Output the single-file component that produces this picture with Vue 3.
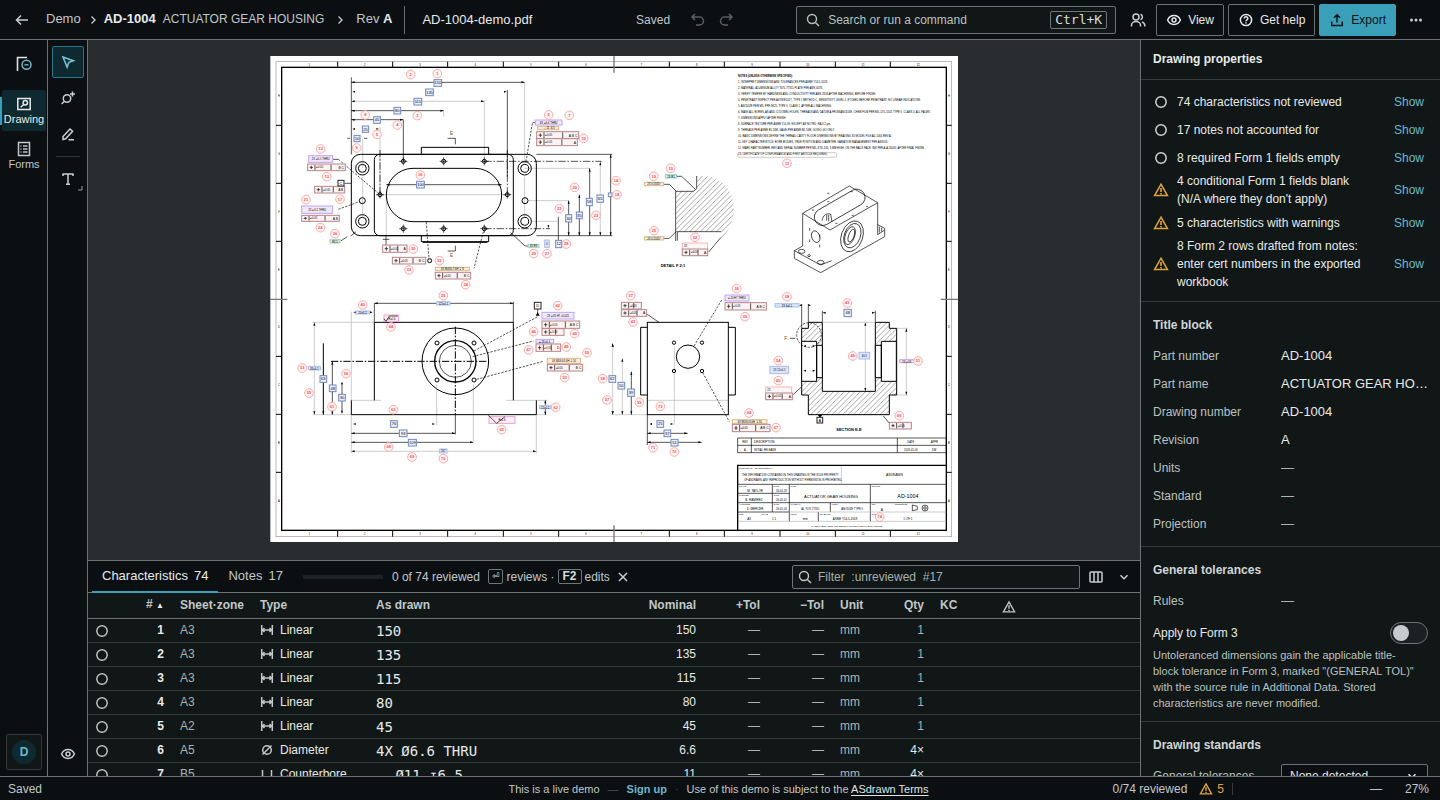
<script setup>
const issues = [
  { kind: 'open', text: '74 characteristics not reviewed' },
  { kind: 'open', text: '17 notes not accounted for' },
  { kind: 'open', text: '8 required Form 1 fields empty' },
  { kind: 'warn', text: "4 conditional Form 1 fields blank (N/A where they don't apply)" },
  { kind: 'warn', text: '5 characteristics with warnings' },
  { kind: 'warn', text: '8 Form 2 rows drafted from notes: enter cert numbers in the exported workbook' },
]
const titleBlock = [
  ['Part number', 'AD-1004'],
  ['Part name', 'ACTUATOR GEAR HOUSING'],
  ['Drawing number', 'AD-1004'],
  ['Revision', 'A'],
  ['Units', '—'],
  ['Standard', '—'],
  ['Projection', '—'],
]
const rows = [
  { n: 1, zone: 'A3', type: 'Linear', drawn: '150', nom: '150', qty: '1' },
  { n: 2, zone: 'A3', type: 'Linear', drawn: '135', nom: '135', qty: '1' },
  { n: 3, zone: 'A3', type: 'Linear', drawn: '115', nom: '115', qty: '1' },
  { n: 4, zone: 'A3', type: 'Linear', drawn: '80', nom: '80', qty: '1' },
  { n: 5, zone: 'A2', type: 'Linear', drawn: '45', nom: '45', qty: '1' },
  { n: 6, zone: 'A5', type: 'Diameter', drawn: '4X Ø6.6 THRU', nom: '6.6', qty: '4×' },
  { n: 7, zone: 'B5', type: 'Counterbore', drawn: '⌴ Ø11 ↧6.5', nom: '11', qty: '4×' },
]

const areas = [
  { x: 0, y: -18 },
  { x: 1020, y: -18 },
  { x: 0, y: 702 },
  { x: 1020, y: 702 },
]
const colTicks = [203, 368, 533, 700, 866, 1198, 1363, 1530, 1696, 1861]
const rowTicks = [208, 382, 556, 901, 1075, 1249]
const colLabels = [118, 284, 450, 616, 783, 948, 1114, 1280, 1446, 1613, 1779, 1945]
const rowLabels = [
  ['H', 121], ['G', 295], ['F', 469], ['E', 643], ['D', 814], ['C', 988], ['B', 1162], ['A', 1336],
]
const notes = [
  'NOTES (UNLESS OTHERWISE SPECIFIED):',
  '1. INTERPRET DIMENSIONS AND TOLERANCES PER ASME Y14.5-2018.',
  '2. MATERIAL: ALUMINUM ALLOY 7075-T7351 PLATE PER AMS 4078.',
  '3. VERIFY TEMPER BY HARDNESS AND CONDUCTIVITY PER AMS 2658 AFTER MACHINING, BEFORE FINISH.',
  '4. PENETRANT INSPECT PER ASTM E1417, TYPE I, METHOD C, SENSITIVITY LEVEL 2. ETCHED BEFORE PENETRANT. NO LINEAR INDICATIONS.',
  '5. ANODIZE PER MIL-PRF-8625, TYPE II, CLASS 1, AFTER ALL MACHINING.',
  '6. MASK ALL BORES, AS AND #2 DOWEL HOLES, THREADS AND DATUM A FROM ANODIZE. CHEM FILM PER MIL-DTL-5541 TYPE II, CLASS 3, ALL FACES.',
  '7. DIMENSIONS APPLY AFTER FINISH.',
  '8. SURFACE TEXTURE PER ASME Y14.36: EXCEPT AS NOTED, RA 3.2 µm.',
  '9. THREADS PER ASME B1.13M. GAGE PER ASME B1.16M, GO/NO-GO ONLY.',
  '10. BASIC DIMENSIONS DEFINE THE THREAD CAVITY FLOOR DIMENSIONS BY READING 3D MODEL FILE AD-1004 REV A.',
  '11. KEY CHARACTERISTICS: BORE BODIES, TRUE POSITION AND DIAMETER. VARIATION MANAGEMENT PER AS9103.',
  '12. MARK PART NUMBER, REV AND SERIAL NUMBER PER MIL-STD-130, 3 MM HIGH, ON THE BACK FACE. INK PER A-A-56032, AFTER FINAL FINISH.',
  '13. CERTIFICATE OF CONFORMANCE AND FIRST ARTICLE REQUIRED.',
]
const balloons = [
  [[502, 71, 1], [422, 74, 2], [442, 197, 3], [382, 225, 4], [286, 195, 8], [321, 253, 5], [260, 294, 9], [836, 195, 6], [898, 196, 7], [941, 265, 10], [152, 297, 12], [170, 380, 13], [210, 448, 17], [108, 449, 21], [151, 533, 24], [195, 551, 26], [451, 375, 16], [430, 597, 30], [417, 660, 33], [508, 632, 31], [587, 704, 34], [520, 737, 35], [868, 476, 23], [914, 412, 20], [978, 496, 22], [1038, 392, 14], [1041, 434, 18], [791, 611, 29], [831, 611, 27], [889, 582, 28]],
  [[531, 340, 11], [182, 355, 15], [131, 379, 19], [132, 542, 25], [255, 562, 32], [380, 716, 36], [62, 737, 37], [531, 740, 38]],
  [[278, 45, 40], [363, 111, 44], [863, 47, 42], [791, 125, 46], [914, 131, 45], [776, 180, 47], [889, 171, 48], [951, 188, 50], [884, 263, 52], [97, 234, 53], [228, 251, 56], [117, 309, 55], [186, 350, 61], [370, 359, 63], [998, 266, 58], [1011, 330, 57], [857, 352, 62], [695, 419, 65], [356, 471, 68], [426, 501, 69], [520, 506, 70]],
  [[69, 96, 43], [405, 80, 39], [712, 39, 41], [728, 198, 49], [924, 213, 51], [505, 212, 54], [505, 272, 60], [417, 369, 64], [498, 413, 67], [868, 377, 66], [88, 337, 59], [151, 349, 73], [129, 473, 71], [193, 486, 72], [809, 681, 74]],
]
// x, y, width, height, kind, text
const tags = [
  [[492, 89, 23, 20, 'dim', '150'], [467, 117, 23, 20, 'dim', '135'], [432, 145, 23, 20, 'dim', '115'], [372, 172, 20, 20, 'dim', '80'], [311, 200, 20, 20, 'dim', '45'], [277, 228, 19, 19, 'dim', '25'], [252, 256, 18, 19, 'dim', '10'], [440, 394, 23, 20, 'dim', '100'], [1015, 429, 11, 11, 'dim', ''], [949, 445, 18, 22, 'dim', '58'], [981, 435, 19, 22, 'dim', '65'], [919, 486, 18, 20, 'dim', '35'], [887, 494, 18, 22, 'dim', '30'], [857, 571, 18, 22, 'dim', '12'], [824, 570, 14, 22, 'size', '6'],
    [116, 317, 72, 20, 'hole', '2X ⌀5.1 THRU'], [113, 342, 113, 20, 'fcf', 'B C'], [134, 409, 90, 20, 'fcf', 'A B'], [204, 391, 18, 17, 'datum', 'C'], [95, 468, 93, 22, 'hole', '2X ⌀6.1 THRU'], [95, 496, 113, 18, 'fcf', 'A B'], [180, 569, 30, 10, 'rad', 'R2.5'], [774, 583, 33, 10, 'rad', '4X R9'], [796, 210, 80, 15, 'hole', '4X ⌀6.6 THRU'], [803, 229, 63, 10, 'thr', '⌴ ⌀11 ↧6.5'], [800, 245, 126, 21, 'fcf', 'A B C'], [800, 266, 122, 21, 'fcf', 'A'], [338, 585, 73, 22, 'fcf', 'A'], [367, 622, 100, 20, 'fcf', 'B C'], [496, 652, 102, 10, 'thr', '6X M4X0.7-6H ↧8'], [496, 667, 106, 20, 'fcf', 'B C']],
  [[166, 374, 34, 10, 'rad', '2X R2'], [103, 397, 58, 10, 'thr', '2X 0.5X45°'], [103, 560, 58, 10, 'thr', '2X 0.5X45°'], [217, 597, 76, 20, 'fcf', 'A']],
  [[500, 35, 40, 10, 'size', '125±0.1'], [258, 63, 40, 9, 'size', '20±0.2'], [115, 229, 36, 11, 'size', '83±0.2'], [150, 257, 20, 20, 'dim', '63'], [178, 285, 20, 20, 'dim', '48'], [206, 313, 20, 20, 'dim', '30'], [362, 392, 20, 20, 'dim', '76'], [388, 420, 23, 20, 'dim', '93'], [415, 448, 24, 20, 'dim', '109'], [509, 477, 22, 12, 'size', '167'], [809, 347, 33, 9, 'size', '12±0.1'], [1017, 257, 20, 20, 'dim', '62'], [342, 75, 44, 19, 'surf', '√Ra1.6'], [657, 380, 78, 20, 'surf', 'Ra1.6'], [793, 37, 20, 20, 'datum', 'D'], [816, 67, 96, 20, 'hole', '2X ⌀35 H7 +0.025'], [816, 93, 113, 22, 'fcf', 'A B C'], [816, 116, 66, 20, 'fcf', ''], [798, 148, 53, 11, 'hole', '⌀28 ±0.1'], [798, 162, 74, 22, 'fcf', 'D'], [832, 205, 100, 15, 'thr', '4X M5X0.8-6H ↧10'], [832, 223, 106, 20, 'fcf', 'B C']],
  [[34, 37, 60, 20, 'fcf', ''], [34, 59, 76, 20, 'fcf', 'A'], [345, 15, 72, 18, 'hole', '⌀20 H7 THRU'], [345, 38, 124, 22, 'fcf', 'A B C'], [24, 277, 20, 20, 'dim', '50'], [53, 297, 20, 22, 'dim', '39'], [141, 392, 20, 20, 'dim', '25'], [162, 420, 20, 20, 'dim', '37'], [183, 448, 21, 20, 'dim', '51'], [367, 389, 104, 12, 'thr', '4X M5X0.8-6H ↧10'], [367, 403, 113, 22, 'fcf', 'A B C'], [495, 41, 72, 10, 'size', '2X 6±0.1'], [702, 58, 22, 22, 'dim', '48'], [747, 187, 32, 20, 'size', '60.5'], [480, 229, 56, 22, 'size', '2X 12±0.1'], [467, 309, 80, 20, 'fcf', 'A'], [838, 397, 66, 20, 'fcf', ''], [869, 209, 42, 9, 'hole', '2X ⌀59'], [621, 382, 17, 17, 'datum', 'A']],
]
// x, y, text, size
const blockText = [
  [397, 460, 'REV', 8], [432, 460, 'DESCRIPTION', 9], [892, 460, 'DATE', 8], [962, 460, 'APPR', 8],
  [402, 482, 'A', 8], [432, 482, 'INITIAL RELEASE', 8], [882, 482, '2026-05-04', 8], [966, 482, 'DM', 8],
  [387, 537, 'PROPRIETARY AND CONFIDENTIAL', 6],
  [396, 557, 'THE INFORMATION CONTAINED IN THIS DRAWING IS THE SOLE PROPERTY', 8],
  [402, 572, 'OF ASDRAWN. ANY REPRODUCTION WITHOUT PERMISSION IS PROHIBITED.', 8],
  [828, 557, 'ASDRAWN', 10],
  [387, 591, 'DRAWN', 6], [412, 605, 'M. TAYLOR', 9], [491, 591, 'DATE', 6], [498, 605, '26-04-28', 8],
  [387, 618, 'CHECKED', 6], [406, 633, 'B. RAMIREZ', 9], [491, 618, 'DATE', 6], [498, 633, '26-05-01', 8],
  [542, 591, 'TITLE', 6], [582, 623, 'ACTUATOR GEAR HOUSING', 12], [785, 591, 'DWG NO.', 6], [862, 624, 'AD-1004', 16],
  [387, 646, 'APPROVED', 6], [410, 660, 'D. MERCER', 9], [491, 646, 'DATE', 6], [498, 660, '26-05-04', 8],
  [542, 646, 'MATERIAL', 6], [574, 660, 'AL 7075-T7351', 8], [665, 646, 'FINISH', 6], [694, 660, 'ANODIZE TYPE II', 8],
  [785, 646, 'REV', 6], [812, 662, 'A', 10], [854, 646, 'PROJECTION', 6],
  [387, 674, 'SIZE', 6], [412, 689, 'A3', 9], [454, 674, 'SCALE', 6], [486, 689, '1:1', 9],
  [542, 674, 'UNITS', 6], [578, 689, 'mm', 9], [629, 674, 'STANDARD', 6], [668, 689, 'ASME Y14.5-2018', 9],
  [785, 674, 'SHEET', 6], [880, 689, '1 OF 1', 9],
  [604, 710, 'CAGE 1ABC2   ASDRAWN DEMO PART NOT FOR MANUFACTURE', 7],
]
</script>

<template>
  <div class="app">
    <svg class="defs" aria-hidden="true">
      <symbol id="i-warn" viewBox="0 0 16 16"><path d="M8 2.2 14.4 13.6H1.6Z" fill="none" stroke="currentColor" stroke-width="1.5" /><path d="M8 6v4M8 11v1.500" fill="none" stroke="currentColor" stroke-width="1.600" /></symbol>
      <symbol id="i-eye" viewBox="0 0 16 16"><path d="M1.6 8C2.8 5.2 5.2 3.6 8 3.6s5.2 1.6 6.4 4.4c-1.2 2.8-3.6 4.4-6.4 4.4S2.8 10.8 1.6 8Z" fill="none" stroke="currentColor" stroke-width="1.5" /><circle cx="8" cy="8" r="2" fill="none" stroke="currentColor" stroke-width="1.5" /></symbol>
      <symbol id="i-ring" viewBox="0 0 16 16"><circle cx="8" cy="8" r="5.2" fill="none" stroke="currentColor" stroke-width="1.5" /></symbol>
      <symbol id="i-search" viewBox="0 0 16 16"><circle cx="7" cy="7" r="4.5" fill="none" stroke="currentColor" stroke-width="1.4" /><path d="m10.4 10.4 3.6 3.6" stroke="currentColor" stroke-width="1.4" /></symbol>
      <symbol id="i-chev" viewBox="0 0 16 16"><path d="m6.500 4.500 3.500 3.500-3.500 3.500" fill="none" stroke="currentColor" stroke-width="1.4" /></symbol>
      <symbol id="i-down" viewBox="0 0 16 16"><path d="m4.500 6.200 3.500 3.500 3.500-3.500" fill="none" stroke="currentColor" stroke-width="1.5" /></symbol>
    </svg>

    <header class="topbar">
      <button class="icon-btn back" aria-label="Back"><svg width="16" height="16" viewBox="0 0 16 16" class="ln"><path d="M14 8H2.5M7 3.5 2.5 8 7 12.5" /></svg></button>
      <nav class="crumbs" aria-label="Breadcrumb">
        <a href="#demo">Demo</a>
        <svg class="sep"><use href="#i-chev" /></svg>
        <a href="#part" class="part"><b>AD-1004</b><span>ACTUATOR GEAR HOUSING</span></a>
        <svg class="sep wide"><use href="#i-chev" /></svg>
        <span>Rev <b class="rev">A</b></span>
      </nav>
      <span class="file">AD-1004-demo.pdf</span>
      <span class="spacer"></span>
      <span class="saved">Saved</span>
      <button class="icon-btn dim" aria-label="Undo"><svg width="16" height="16" viewBox="0 0 16 16" class="ln"><path d="M5 2 2 5l3 3M2 5h7.500a4 4 0 0 1 0 8H6" /></svg></button>
      <button class="icon-btn dim redo" aria-label="Redo"><svg width="16" height="16" viewBox="0 0 16 16" class="ln"><path d="m11 2 3 3-3 3M14 5H6.500a4 4 0 0 0 0 8H10" /></svg></button>
      <button class="command"><svg class="i16"><use href="#i-search" /></svg><span>Search or run a command</span><kbd>Ctrl+K</kbd></button>
      <button class="icon-btn people" aria-label="Share"><svg width="16" height="16" viewBox="0 0 16 16" class="ln"><circle cx="6" cy="5" r="3" /><path d="M1.500 14.500v-1.500c0-2 2-3.500 4.500-3.500s4.500 1.500 4.500 3.500v1.500M10.500 2.200a3 3 0 0 1 0 5.600M12 10c1.700.6 2.800 1.800 2.800 3.500v1" /></svg></button>
      <button class="btn"><svg class="i16"><use href="#i-eye" /></svg>View</button>
      <button class="btn"><svg width="16" height="16" viewBox="0 0 16 16" class="ln"><circle cx="8" cy="8" r="5.600" /><path d="M6.300 6.500c0-2.400 3.600-2.200 3.600 0C9.900 7.800 8 7.900 8 9.300M8 10.300v1.300" /></svg>Get help</button>
      <button class="btn primary"><svg width="16" height="16" viewBox="0 0 16 16" class="ln"><path d="M8 10.500V3M5 5.800 8 2.800l3 3M2.700 9.500v4h10.600v-4" /></svg>Export</button>
      <button class="icon-btn more" aria-label="More"><svg width="16" height="16" viewBox="0 0 16 16" fill="currentColor"><circle cx="3.500" cy="8" r="1.500" /><circle cx="8" cy="8" r="1.500" /><circle cx="12.500" cy="8" r="1.500" /></svg></button>
    </header>

    <div class="body">
      <nav class="rail" aria-label="Sections">
        <svg class="logo" width="18" height="18" viewBox="0 0 18 18" fill="none"><path d="M2.500 16V2.500H12" stroke="#dfe4e4" stroke-width="1.600" /><circle cx="11.500" cy="9.800" r="4.500" stroke="#6cb8cb" stroke-width="1.500" /><path d="M9.500 9.800h4" stroke="#6cb8cb" stroke-width="1.400" /></svg>
        <a href="#drawing" class="rail-item on"><svg width="16" height="16" viewBox="0 0 16 16" class="ln"><path d="M1.800 2.500h12.400v11H1.800Z" /><circle cx="9.300" cy="6.800" r="2.200" /><path d="m7.700 8.500-3 2.800" /></svg>Drawing</a>
        <a href="#forms" class="rail-item"><svg width="16" height="16" viewBox="0 0 16 16" class="ln"><path d="M2.500 1.500h11v13h-11ZM4.500 5h1M7 5h4.500M4.500 8h1M7 8h4.500M4.500 11h1M7 11h4.500" /></svg>Forms</a>
        <button class="account" aria-label="Account"><span>D</span></button>
      </nav>
      <div class="tools">
        <button class="tool on" aria-label="Select"><svg width="16" height="16" viewBox="0 0 16 16" class="ln"><path d="m3 3 10.500 3.700-4.700 1.700-1.700 4.700Z" /></svg></button>
        <button class="tool" aria-label="Add balloon"><svg width="16" height="16" viewBox="0 0 16 16" class="ln"><circle cx="7" cy="8.500" r="3.700" /><path d="m4.400 11.200-2.800 2.800M12.500 1.500v5M10 4h5" /></svg></button>
        <button class="tool" aria-label="Edit"><svg width="16" height="16" viewBox="0 0 16 16" class="ln"><path d="M3 13.500v-3L10 3l2.600 2.300-7 7.500ZM8.500 13.800h5.500" /></svg></button>
        <hr />
        <button class="tool" aria-label="Text"><svg width="16" height="16" viewBox="0 0 16 16" class="ln"><path d="M3 5V3h10v2M8 3v10M6 13.200h4" /></svg><svg class="corner" width="5" height="5" viewBox="0 0 5 5"><path d="M4 0v4H0" fill="none" stroke="#8f9696" /></svg></button>
        <button class="tool bottom" aria-label="Visibility"><svg class="i16"><use href="#i-eye" /></svg></button>
      </div>

      <main class="work">
        <div class="stage">
          <svg class="sheet" viewBox="0 0 2064 1458" role="img" aria-label="AD-1004 drawing sheet">
            <defs><pattern id="hatch" width="16" height="16" patternUnits="userSpaceOnUse"><path d="M-4 20 20-4M-4 4 4-4M12 20l8-8" stroke="#777" stroke-width="2" /></pattern></defs>
            <rect width="2064" height="1458" fill="#fff" />
            <path d="M1.500 0V1458" class="l2" />
            <rect x="18" y="17" width="2027" height="1425" class="l2" />
            <rect x="35" y="34" width="1994" height="1389" class="k" stroke-width="4" />
            <path d="M1032 0V50M1032 1408V1458M0 730H52M2012 730H2064" class="g" stroke-width="4" />
            <path v-for="x in colTicks" :key="'c' + x" :d="`M${x} 17V34M${x} 1423V1442`" class="k" />
            <path v-for="y in rowTicks" :key="'r' + y" :d="`M18 ${y}H35M2029 ${y}H2045`" class="k" />
            <template v-for="(x, i) in colLabels" :key="'t' + x"><text :x="x" y="29" class="t mid">{{ i + 1 }}</text><text :x="x" y="1436" class="t mid">{{ i + 1 }}</text></template>
            <template v-for="[c, y] in rowLabels" :key="c"><text x="27" :y="y + 3" class="t mid">{{ c }}</text><text x="2037" :y="y + 3" class="t mid">{{ c }}</text></template>

            <g transform="translate(0 -18)">
              <path class="l" d="M764 97V340M643 150V334M278 265V355M521 182V200M250 154H643M330 232V434M960 355H764M897 452H775M865 514H785M330 434H712M991 334V557M278 380V500M764 380V500M349 434V560" />
              <path class="k" stroke-width="2" d="M244 97H764M244 182H521M244 209H400M232 265H240M282 265H292M244 82V313M400 209V334M712 120V380M349 404H695M896 452V557M928 434V557M959 355V557M865 500V570M799 313H1027M799 557H1027M1022 313V557" />
              <path class="k dd" stroke-width="2" d="M712 300V434M643 334H995M643 536H840M330 300V434" />
              <path class="arrow" d="m244 97 10-3v6ZM764 97l-10-3v6ZM244 154l10-3v6ZM643 154l-10-3v6ZM244 182l10-3v6ZM521 182l-10-3v6ZM244 209l10-3v6ZM400 209l-10-3v6ZM247 125l8-3v6ZM710 125l-8-3v6ZM247 237l8-3v6ZM327 237l-8-3v6ZM349 404l10-3v6ZM695 404l-10-3v6ZM896 452l-3 10h6ZM928 434l-3 10h6ZM959 355l-3 10h6ZM991 336l-3 10h6ZM1022 313l-3 10h6ZM1022 557l-3-10h6ZM991 557l-3-10h6ZM959 557l-3-10h6ZM928 557l-3-10h6ZM896 557l-3-10h6ZM832 526l6 0-3 8Z" />
              <rect class="k" x="244" y="313" width="555" height="244" rx="27" />
              <rect class="k" x="313" y="313" width="417" height="244" rx="16" />
              <rect class="k" x="349" y="355" width="346" height="160" rx="80" />
              <path class="k" d="M454 313V292H656V313M454 557V575H656V557M458 577H652" />
              <path class="k" stroke-width="2" d="M533 265H556V283M556 587V603H533" />
              <g class="k"><template v-for="[x, y] in [[277, 355], [277, 514], [764, 355], [764, 514]]" :key="x + '-' + y"><circle :cx="x" :cy="y" r="20" /><circle :cx="x" :cy="y" r="12" /></template></g>
              <g class="k"><circle cx="277" cy="452" r="9" /><circle cx="765" cy="452" r="9" /></g>
              <g v-for="[x, y] in [[400, 334], [521, 334], [643, 334], [400, 536], [521, 536], [643, 536], [330, 434], [712, 434]]" :key="x + ':' + y"><circle class="k" :cx="x" :cy="y" r="6" /><path class="k" stroke-width="2" :d="`M${x - 12} ${y}h24M${x} ${y - 12}v24`" /></g>
              <path class="k dash" stroke-width="2" d="M205 328 330 434M205 478 268 455M787 220 768 335M469 516 477 628M640 545 612 655" />
              <path class="k" stroke-width="2" d="M258 545 242 558M212 573 232 560M722 548 765 588H774M188 328H205M348 557V585M338 568H358M224 400H244M788 218H796" />
              <circle class="k" cx="479" cy="632" r="6" />
              <text x="540" y="255" class="t sec">E</text><text x="540" y="621" class="t sec">E</text>
            </g>

            <g transform="translate(1020 -18)">
              <text v-for="(n, i) in notes" :key="i" x="384" :y="(i ? 100 : 80) + (i ? (i - 1) * 18 : 0)" :class="['t', { b: i === 0 }]">{{ n }}</text>
              <rect x="383" y="308" width="297" height="14" class="l" rx="3" />
              <path fill="url(#hatch)" d="M260 378V416L250 424H197V545H333V565C392 520 390 395 290 378Z" />
              <path class="k" stroke-width="2" d="M260 378V416L250 424M197 424H250M197 424V573M202 545H333M202 545V572" />
              <path class="k" stroke-width="2" d="M200 379H215L256 418M161 403H178L199 424M161 565H178L200 543M296 606 333 562M290 597V617" />
              <rect class="tag two" x="217" y="579" width="76" height="38" />
              <text x="222" y="592" class="t">2X</text>
              <text x="189" y="652" class="t b m mid">DETAIL F 2:1</text>
              <g class="k" stroke-width="2">
                <path d="M578 490 718 408 803 458 660 540ZM578 490V588M803 458V554M578 588 553 602V625L632 668 824 560V535L803 524M553 602 632 645 665 632M803 554 824 540M808 530V548M815 533V545" />
                <rect x="-84" y="-25" width="168" height="50" rx="25" transform="translate(689 472) rotate(-30)" />
                <path d="M636 512C640 494 648 490 662 492L666 516M650 494V512M656 494V514" />
                <ellipse cx="726" cy="559" rx="32" ry="48" transform="rotate(20 726 559)" />
                <ellipse cx="727" cy="557" rx="24" ry="38" transform="rotate(20 727 557)" />
                <ellipse cx="720" cy="557" rx="14" ry="28" transform="rotate(20 720 557)" />
                <ellipse cx="724" cy="557" rx="8" ry="20" transform="rotate(20 724 557)" />
                <ellipse cx="617" cy="560" rx="12" ry="18" transform="rotate(-20 617 560)" />
                <ellipse cx="575" cy="604" rx="10" ry="6" /><ellipse cx="632" cy="637" rx="10" ry="6" /><ellipse cx="597" cy="617" rx="4" ry="3" />
                <path d="M599 534v8M629 554v8M599 568v8M629 584v8M652 430h6M722 425h6M768 470h6M725 496h6M652 455h6M606 480h6M676 520h6" />
              </g>
            </g>

            <g transform="translate(0 702)">
              <path class="l" d="M128 97H313M128 374H244M244 65V331M244 331H333M708 331H799M500 283V405M610 283V455M133 97V374M244 374V490M799 374V490M799 331H832M799 374H832M244 484H799" />
              <path class="k" d="M313 331V97M313 97H730M730 97V331M244 331V374H799V331M160 160V374" />
              <path class="k" stroke-width="2" d="M313 40V97M730 35V97M313 40H730M187 214V374M216 280V370M244 430H556M244 457H610M556 374V433M826 331V374M803 57V75" />
              <path class="arrow" d="m313 40 10-3v6ZM730 40l-10-3v6ZM250 67l8-3v6ZM308 67l-8-3v6ZM133 97l-3 10h6ZM133 374l-3-10h6ZM160 374l-3-10h6ZM187 214l-3 10h6ZM187 374l-3-10h6ZM216 275l-3 8h6ZM216 370l-3-8h6ZM244 430l10-3v6ZM556 430l-10-3v6ZM244 457l10-3v6ZM610 457l-10-3v6ZM244 484l10-3v6ZM799 484l-10-3v6ZM249 402l8-3v6ZM495 402l-8-3v6ZM826 331l-3 9h6ZM826 374l-3-9h6ZM797 77h12l-6-10ZM1028 160l-3 10h6ZM1028 374l-3-10h6Z" />
              <circle class="k" cx="556" cy="214" r="100" /><circle class="k" cx="556" cy="214" r="62" stroke-width="4" /><circle class="k" cx="556" cy="214" r="48" stroke-width="2" />
              <circle v-for="[x, y] in [[501, 159], [612, 159], [501, 270], [612, 270]]" :key="x + ',' + y" class="k" :cx="x" :cy="y" r="6" />
              <path class="k dd" d="M183 214H657M556 110V374" />
              <path class="k dash" stroke-width="2" d="M612 183 803 80M608 200 790 153M620 268 820 214" />
            </g>

            <g transform="translate(1020 702)">
              <path class="l" d="M112 331H355M193 170V405M37 215V374M3 374H112M8 170V374M889 115V315M860 115H893M860 315H893M766 105V300" />
              <rect class="k" x="112" y="97" width="243" height="277" />
              <path class="k" d="M112 112H92V315H112M355 112H376V315H355" />
              <circle class="k" cx="234" cy="200" r="35" />
              <circle v-for="[x, y] in [[192, 158], [276, 158], [192, 243], [276, 243]]" :key="x + '/' + y" class="k" :cx="x" :cy="y" r="5" />
              <path class="k" stroke-width="2" d="M64 245V374M112 374V465M112 430H233M112 457H275M110 72 147 97" />
              <path class="k dash" stroke-width="2" d="M252 168 335 30M278 248 358 395" />
              <path class="arrow" d="m112 430 10-3v6ZM233 430l-10-3v6ZM112 457l10-3v6ZM275 457l-10-3v6ZM118 402l8-3v6ZM190 402l-8-3v6ZM64 245l-3 10h6ZM64 374l-3-10h6ZM37 205l-3 10h6ZM37 374l-3-10h6ZM8 160l-3 10h6ZM8 374l-3-10h6ZM637 68l10-3v6ZM796 68l-10-3v6ZM766 97l-3 10h6ZM766 304l-3-10h6ZM889 115l-3 10h6ZM889 315l-3-10h6ZM623 374h14l-7 9Z" />
              <path fill="url(#hatch)" class="k" d="M595 374V315H575V115H595V97H637V304H796V97H838V115H860V315H838V374Z" />
              <path fill="#fff" stroke="#000" stroke-width="3" d="M575 154H620V274H575ZM814 154H859V274H814ZM620 166H637V263H620ZM796 166H814V263H796Z" />
              <path class="l" d="M637 97H796" />
              <circle class="k dash" cx="597" cy="135" r="37" stroke-width="2" />
              <path class="k" stroke-width="2" d="M575 42V115M595 42V97M637 62V97M796 62V97M540 145H556M548 315 573 292M820 378 838 400" />
              <path class="arrow" d="m580 168 8-3v6ZM616 168l-8-3v6ZM580 242l8-3v6ZM616 242l-8-3v6ZM567 46l8-3v6ZM603 46l-8-3v6Z" />
              <text x="523" y="149" class="t sec">F</text>
              <rect class="tag two" x="467" y="291" width="78" height="38" />
              <text x="472" y="304" class="t">2X</text>
              <text x="717" y="423" class="t b m mid">SECTION E-E</text>
              <path class="k" stroke-width="2" d="M383 444H1009V488H383ZM383 466H1009M424 444V488M862 444V488" />
              <path class="k" stroke-width="2" d="M383 583H1009M383 610H538M383 638H1009M383 666H538M661 638V666M487 583V666M538 583V694M781 583V694M625 666V694" />
              <path class="l" d="M538 666H1009M383 694H1009M694 526V583" />
              <path class="k" stroke-width="4" d="M1009 526H383V721" />
              <path class="k" stroke-width="2" d="M907 645V662L922 659V649Z" /><circle class="k" cx="945" cy="654" r="9" stroke-width="2" /><circle class="k" cx="945" cy="654" r="4" stroke-width="2" />
              <text v-for="(b, i) in blockText" :key="i" :x="b[0]" :y="b[1]" :font-size="b[3]" class="bt">{{ b[2] }}</text>
            </g>

            <g v-for="(a, k) in areas" :key="k" :transform="`translate(${a.x} ${a.y})`">
              <g v-for="(t, i) in tags[k]" :key="'g' + i">
                <rect :x="t[0]" :y="t[1]" :width="t[2]" :height="t[3]" :class="['tag', t[4]]" />
                <path v-if="t[4] === 'fcf'" class="k" stroke-width="2" :d="`M${t[0] + 22} ${t[1] + 2}v${t[3] - 4}M${t[0] + t[2] * 0.62} ${t[1] + 2}v${t[3] - 4}M${t[0] + 6} ${t[1] + t[3] / 2}h10M${t[0] + 11} ${t[1] + 5}v${t[3] - 10}`" />
                <text v-if="t[4] === 'fcf'" :x="t[0] + 25" :y="t[1] + t[3] / 2 + 3" class="t">⌀0.05</text>
                <text v-if="t[4] === 'fcf'" :x="t[0] + t[2] - 4" :y="t[1] + t[3] / 2 + 4" class="t n end">{{ t[5] }}</text>
                <text v-else :x="t[0] + t[2] / 2" :y="t[1] + t[3] / 2 + 4" :class="['t', 'mid', { m: t[4] === 'dim' || t[4] === 'datum' }]">{{ t[5] }}</text>
              </g>
              <g v-for="b in balloons[k]" :key="b[2]" class="balloon"><circle :cx="b[0]" :cy="b[1]" r="13" /><text :x="b[0]" :y="b[1] + 4">{{ b[2] }}</text></g>
            </g>
            <path transform="translate(0 702)" class="k" stroke-width="2" d="M655 376 680 400 705 380M342 86 348 94 358 78H384" />
          </svg>
        </div>

        <section class="grid-panel">
          <div class="grid-bar">
            <div class="tabs" role="tablist">
              <button role="tab" aria-selected="true" class="tab on">Characteristics<span>74</span></button>
              <button role="tab" aria-selected="false" class="tab">Notes<span>17</span></button>
            </div>
            <div class="progress" role="progressbar" aria-valuenow="0" aria-valuemin="0" aria-valuemax="74" aria-label="Reviewed"></div>
            <span class="count">0 of 74 reviewed</span>
            <span class="hint"><kbd class="enter">⏎</kbd><span>reviews ·</span><kbd>F2</kbd><span>edits</span></span>
            <button class="icon-btn close" aria-label="Dismiss"><svg width="16" height="16" viewBox="0 0 16 16" class="ln"><path d="m4 4 8 8M12 4l-8 8" /></svg></button>
            <span class="spacer"></span>
            <label class="filter"><svg class="i16"><use href="#i-search" /></svg><input type="text" aria-label="Filter" placeholder="Filter  :unreviewed  #17" /></label>
            <button class="icon-btn cols" aria-label="Columns"><svg width="16" height="16" viewBox="0 0 16 16" class="ln"><rect x="2" y="3" width="12" height="10" rx="1" /><path d="M6 3v10M10 3v10" /></svg></button>
            <button class="icon-btn" aria-label="Collapse"><svg class="i16"><use href="#i-down" /></svg></button>
          </div>
          <div class="table-wrap">
            <table>
              <colgroup><col class="c-state" /><col class="c-num" /><col class="c-zone" /><col class="c-type" /><col class="c-drawn" /><col class="c-nom" /><col class="c-tol" /><col class="c-tol" /><col class="c-unit" /><col class="c-qty" /><col class="c-kc" /><col /></colgroup>
              <thead><tr><th></th><th class="r"># <small>▲</small></th><th>Sheet·zone</th><th>Type</th><th>As drawn</th><th class="r">Nominal</th><th class="r">+Tol</th><th class="r">−Tol</th><th>Unit</th><th class="r">Qty</th><th>KC</th><th><svg class="i14"><use href="#i-warn" /></svg></th></tr></thead>
              <tbody>
                <tr v-for="r in rows" :key="r.n">
                  <td class="state"><svg class="i16"><use href="#i-ring" /></svg></td>
                  <td class="r num">{{ r.n }}</td>
                  <td class="soft">{{ r.zone }}</td>
                  <td><span class="type">
                    <svg width="14" height="14" viewBox="0 0 14 14" class="ln"><path v-if="r.type === 'Linear'" d="M1.700 2v10M12.300 2v10M2 7h10M4.500 5 2.500 7l2 2M9.500 5l2 2-2 2" /><path v-else-if="r.type === 'Counterbore'" d="M2.500 3v8h9V3" /><g v-else><circle cx="7" cy="7" r="4.300" /><path d="M2.500 11.500 11.500 2.500" /></g></svg>{{ r.type }}</span></td>
                  <td class="mono">{{ r.drawn }}</td>
                  <td class="r">{{ r.nom }}</td>
                  <td class="r soft">—</td><td class="r soft">—</td>
                  <td class="soft">mm</td>
                  <td :class="['r', { soft: r.qty === '1' }]">{{ r.qty }}</td>
                  <td></td><td></td>
                </tr>
              </tbody>
            </table>
          </div>
        </section>
      </main>

      <aside class="props">
        <h2>Drawing properties</h2>
        <ul class="issues">
          <li v-for="i in issues" :key="i.text"><svg :class="['i16', i.kind]"><use :href="i.kind === 'warn' ? '#i-warn' : '#i-ring'" /></svg><span>{{ i.text }}</span><a href="#show">Show</a></li>
        </ul>
        <section class="group">
          <h3>Title block</h3>
          <dl><div v-for="[k, v] in titleBlock" :key="k"><dt>{{ k }}</dt><dd :class="{ soft: v === '—' }">{{ v }}</dd></div></dl>
        </section>
        <section class="group tol">
          <h3>General tolerances</h3>
          <dl><div><dt>Rules</dt><dd class="soft">—</dd></div></dl>
          <label class="switch">Apply to Form 3<input type="checkbox" role="switch" /></label>
          <p>Untoleranced dimensions gain the applicable title-block tolerance in Form 3, marked "(GENERAL TOL)" with the source rule in Additional Data. Stored characteristics are never modified.</p>
        </section>
        <section class="group last">
          <h3>Drawing standards</h3>
          <div class="field"><label for="std">General tolerances</label><span class="select"><select id="std"><option>None detected</option></select><svg class="i16"><use href="#i-down" /></svg></span></div>
        </section>
      </aside>
    </div>

    <footer class="status">
      <span class="left">Saved</span>
      <span class="center">This is a live demo<i>—</i><a href="#signup" class="signup">Sign up</a><i>·</i><span>Use of this demo is subject to the <a href="#terms" class="terms">ASdrawn Terms</a></span></span>
      <span class="right"><span>0/74 reviewed</span><span class="amber"><svg class="i14"><use href="#i-warn" /></svg>5</span><span class="bar"></span><span class="zoom"><span>—</span><span>27%</span></span></span>
    </footer>
  </div>
</template>

<style>
html, body { background: #0b0f12; overflow: hidden; }
</style>

<style scoped>
.app { height: 100vh; display: flex; flex-direction: column; background: #0b0f12; color: #e6eaea; font: 12px/16px "Liberation Sans", Arial, sans-serif; overflow: hidden; }
.app *, .app *::before { box-sizing: border-box; }
.defs { position: absolute; width: 0; height: 0; }
button, input, select { font: inherit; color: inherit; }
button { background: none; border: 0; padding: 0; margin: 0; }
a { color: inherit; text-decoration: none; }
svg { flex: none; }
.ln { fill: none; stroke: currentColor; stroke-width: 1.5; }
.i16 { width: 16px; height: 16px; }
.i14 { width: 14px; height: 14px; }
.spacer { flex: 1; }
.icon-btn { display: flex; color: #c9cfcf; }
kbd { font: 13px/16px "DejaVu Sans Mono", "Liberation Mono", monospace; border: 1px solid #6f7677; border-radius: 2px; padding: 0 4px; color: #d6dcdd; }

.topbar { display: flex; align-items: center; height: 40px; border-bottom: 1px solid #6d7374; padding: 0 16px 0 14px; flex: none; }
.back { margin-right: 16px; }
.crumbs { display: flex; align-items: center; font-size: 13px; color: #c0c8c9; height: 28px; border-right: 1px solid #6d7374; padding: 0 12px 2px 0; margin-right: 17px; }
.crumbs b { color: #e6eaea; }
.part { display: flex; }
.part span { font-size: 12px; margin-left: 7px; }
.sep { width: 16px; height: 16px; margin: 2px 3px 0 4px; }
.sep.wide { margin: 2px 8px 0; }
.file { font-size: 13px; }
.saved { color: #c0c8c9; margin-right: 20px; }
.icon-btn.dim { color: #596062; }
.redo { margin: 0 62px 0 12px; }
.command { display: flex; align-items: center; width: 320px; height: 28px; border: 1px solid #6d7374; border-radius: 2px; background: #111716; color: #b9c1c1; padding: 0 8px; gap: 7px; text-align: left; }
.command span { flex: 1; }
.people { margin: 0 10px 0 14px; }
.btn { display: flex; align-items: center; gap: 6px; height: 32px; border: 1px solid #6d7374; border-radius: 2px; padding: 0 9px; margin-right: 4px; }
.btn.primary { background: #3aa0b9; border-color: #3aa0b9; color: #0b1417; margin-right: 12px; }

.body { flex: 1; min-height: 0; display: flex; }
.rail { width: 48px; border-right: 1px solid #6d7374; display: flex; flex-direction: column; align-items: center; padding: 15px 1px 6px 2px; flex: none; color: #c0c8c9; }
.logo { margin-bottom: 17px; }
.rail-item { width: 44px; height: 41px; display: flex; flex-direction: column; align-items: center; padding-top: 6px; font-size: 11px; line-height: 15px; margin-bottom: 4px; position: relative; }
.rail-item.on { background: #0e2a30; color: #e6eaea; border-radius: 2px; }
.rail-item.on::before { content: ""; position: absolute; left: -2px; top: 7px; width: 2px; height: 28px; background: #3aa0b9; }
.account { margin-top: auto; width: 36px; height: 36px; border: 1px solid #343a3c; border-radius: 2px; background: #111716; display: grid; place-items: center; }
.account span { width: 24px; height: 24px; border-radius: 50%; background: #0e2a30; color: #6cb8cb; font-weight: bold; line-height: 24px; }
.tools { width: 40px; border-right: 1px solid #6d7374; display: flex; flex-direction: column; align-items: center; gap: 4px; padding: 6px 0; flex: none; color: #c9cfcf; }
.tool { width: 32px; height: 32px; display: grid; place-items: center; position: relative; }
.tool.on { background: #0e2a30; border: 1px solid #2a7688; border-radius: 2px; color: #7cc4d6; }
.tools hr { width: 24px; border: 0; border-top: 1px solid #343a3c; margin: 2px 0; }
.corner { position: absolute; right: 1px; bottom: 4px; }
.bottom { margin-top: auto; }

.work { flex: 1; min-width: 0; display: flex; flex-direction: column; }
.stage { flex: 1; min-height: 0; background: #2a2d30; display: flex; justify-content: center; padding: 16px 0 18px; }
.sheet { display: block; height: 100%; max-width: 100%; font-family: "Liberation Sans", Arial, sans-serif; }
.k { stroke: #000; stroke-width: 3; }
.k[stroke-width="2"] { stroke-width: 2; }
.k[stroke-width="4"] { stroke-width: 4; }
.k:not([fill]) { fill: none; }
.g { stroke: #777; stroke-width: 4; fill: none; }
.l { stroke: #b4b4b4; stroke-width: 2; fill: none; }
.l2 { stroke: #999; stroke-width: 2; fill: none; }
.dash { stroke-dasharray: 7 4; }
.dd { stroke-dasharray: 22 5 5 5; }
.arrow { fill: #000; }
.t { font-size: 8px; fill: #000; }
.t.b { font-weight: bold; }
.t.n { font-size: 10px; }
.t.m { font-size: 12px; }
.t.sec { font-size: 14px; fill: #7a4a12; }
.mid { text-anchor: middle; }
.end { text-anchor: end; }
.bt { fill: #000; }
.tag { fill: #fff; stroke: #9fb2ee; stroke-width: 3; }
.tag.dim { fill: #eef1fc; stroke: #6f86c4; }
.tag.size { fill: #dfe6fb; stroke: #a9bbf0; }
.tag.hole { fill: #efe8fb; stroke: #c0a6ee; }
.tag.thr { fill: #fbeed9; stroke: #d9b98a; }
.tag.rad { fill: #d8efe6; stroke: #9ccfbc; }
.tag.surf { fill: #fdf0f8; stroke: #eaa3cf; }
.tag.fcf { fill: #fdf3f3; stroke: #b98488; }
.tag.two { fill: #fff7f7; stroke: #f0b8bc; }
.tag.datum { stroke: #222; }
.balloon circle { fill: #fff5f5; stroke: #ffaaaa; stroke-width: 3; }
.balloon text { font-size: 12px; font-weight: bold; fill: #f25050; text-anchor: middle; }

.grid-panel { height: 216px; flex: none; display: flex; flex-direction: column; border-top: 1px solid #6d7374; background: #111716; }
.grid-bar { display: flex; align-items: center; height: 32px; background: #0b0f12; border-bottom: 1px solid #6d7374; padding: 0 8px 0 4px; flex: none; color: #c0c8c9; }
.tabs { display: flex; height: 32px; font-size: 13px; }
.tab { padding: 0 10px; border-bottom: 2px solid transparent; }
.tab span { margin-left: 6px; }
.tab.on { border-color: #3aa0b9; color: #e6eaea; }
.progress { width: 80px; height: 4px; background: #1d2224; margin: 0 9px 0 10px; }
.count { margin-right: 8px; }
.hint { display: flex; align-items: center; gap: 3px; }
.hint kbd { font: bold 12px/13px "Liberation Sans", Arial, sans-serif; padding: 0 4px; }
.hint .enter { font: 9px/13px "DejaVu Sans", sans-serif; padding: 0 3px; }
.close { margin-left: 5px; }
.filter { display: flex; align-items: center; gap: 5px; width: 288px; height: 24px; border: 1px solid #6d7374; border-radius: 2px; background: #111716; padding: 0 4px; margin-right: 8px; }
.filter input { flex: 1; min-width: 0; background: none; border: 0; padding: 0; outline: 0; white-space: pre; }
.filter input::placeholder { color: #a6aeae; opacity: 1; white-space: pre; }
.cols { margin-right: 12px; }
.table-wrap { flex: 1; min-height: 0; overflow: hidden; }
table { width: 100%; table-layout: fixed; border-collapse: separate; border-spacing: 0; }
.c-state { width: 28px; } .c-num { width: 56px; } .c-zone { width: 80px; } .c-type { width: 116px; } .c-drawn { width: 240px; } .c-nom { width: 96px; } .c-tol { width: 64px; } .c-unit { width: 44px; } .c-qty { width: 56px; } .c-kc { width: 62px; }
th, td { padding: 0 8px; text-align: left; white-space: nowrap; }
th { height: 26px; color: #c0c8c9; border-bottom: 1px solid #6d7374; font-weight: bold; padding-bottom: 1px; }
th small { font-size: 8px; color: #e6eaea; }
th svg { display: block; margin-top: 3px; }
td { height: 24px; border-bottom: 1px solid #343a3b; padding-bottom: 1px; }
.r { text-align: right; }
.num { font-weight: bold; }
.soft { color: #a9b1b1; }
.state { padding: 0 0 0 6px; color: #b9c1c1; }
.state svg { display: block; margin-top: 1px; }
.type { display: flex; align-items: center; gap: 6px; }
.type svg { color: #c0c8c9; }
.mono { font: 14px/16px "DejaVu Sans Mono", "Liberation Mono", monospace; padding-bottom: 0; }

.props { width: 300px; flex: none; border-left: 1px solid #6d7374; background: #111716; overflow: hidden; }
h2 { margin: 0; font-size: 12px; line-height: 39px; height: 40px; padding: 0 12px; border-bottom: 1px solid #343a3b; }
h3 { margin: 0 0 6px; font-size: 12px; line-height: 22px; color: #d0d6d6; }
.issues { list-style: none; margin: 0; padding: 8px 12px 9px; line-height: 18px; border-bottom: 1px solid #343a3b; }
.issues li { display: flex; align-items: center; min-height: 28px; gap: 8px; padding-bottom: 1px; }
.issues span { flex: 1; padding-right: 20px; }
.issues a { color: #6cb8cb; padding-right: 4px; }
.warn, .amber { color: #e0a33a; }
.open { color: #cfd5d5; }
.group { padding: 12px 12px 8px; border-bottom: 1px solid #343a3b; }
.tol { padding-bottom: 10px; }
.group.last { border: 0; }
dl { margin: 0; }
dl div, .field { display: grid; grid-template-columns: 128px minmax(0, 1fr); align-items: center; height: 28px; }
dt, .field label { color: #b9c1c1; }
dd { margin: 0; font-size: 13px; white-space: nowrap; overflow: hidden; text-overflow: ellipsis; }
.switch { display: flex; align-items: center; justify-content: space-between; height: 28px; margin-top: 4px; }
.switch input { appearance: none; width: 38px; height: 22px; margin: 0; border: 1px solid #6d7374; border-radius: 11px; background: #1b2022; padding: 2px; }
.switch input::before { content: ""; display: block; width: 16px; height: 16px; border-radius: 50%; background: #c6cccd; }
p { margin: 0; color: #b9c1c1; font-size: 11px; padding-right: 8px; }
.select { position: relative; display: block; }
.select select { appearance: none; width: 100%; height: 24px; background: #0b0f12; border: 1px solid #6d7374; border-radius: 2px; padding: 0 8px; }
.select svg { position: absolute; right: 8px; top: 4px; pointer-events: none; }

.status { flex: none; height: 24px; border-top: 1px solid #6d7374; display: grid; grid-template-columns: 1fr auto 1fr; align-items: center; padding: 0 11px 0 8px; color: #c0c8c9; }
.center { font-size: 11px; }
.center i { font-style: normal; color: #4a5052; margin: 0 8px; }
.signup { color: #6cb8cb; font-weight: bold; }
.terms { text-decoration: underline; text-underline-offset: 2px; color: #dfe4e4; }
.right { display: flex; align-items: center; justify-content: flex-end; }
.amber { display: flex; align-items: center; gap: 4px; margin-left: 12px; }
.bar { width: 1px; height: 12px; background: #343a3c; margin-left: 8px; }
.zoom { display: flex; justify-content: space-between; width: 59px; margin-left: 137px; }
</style>
